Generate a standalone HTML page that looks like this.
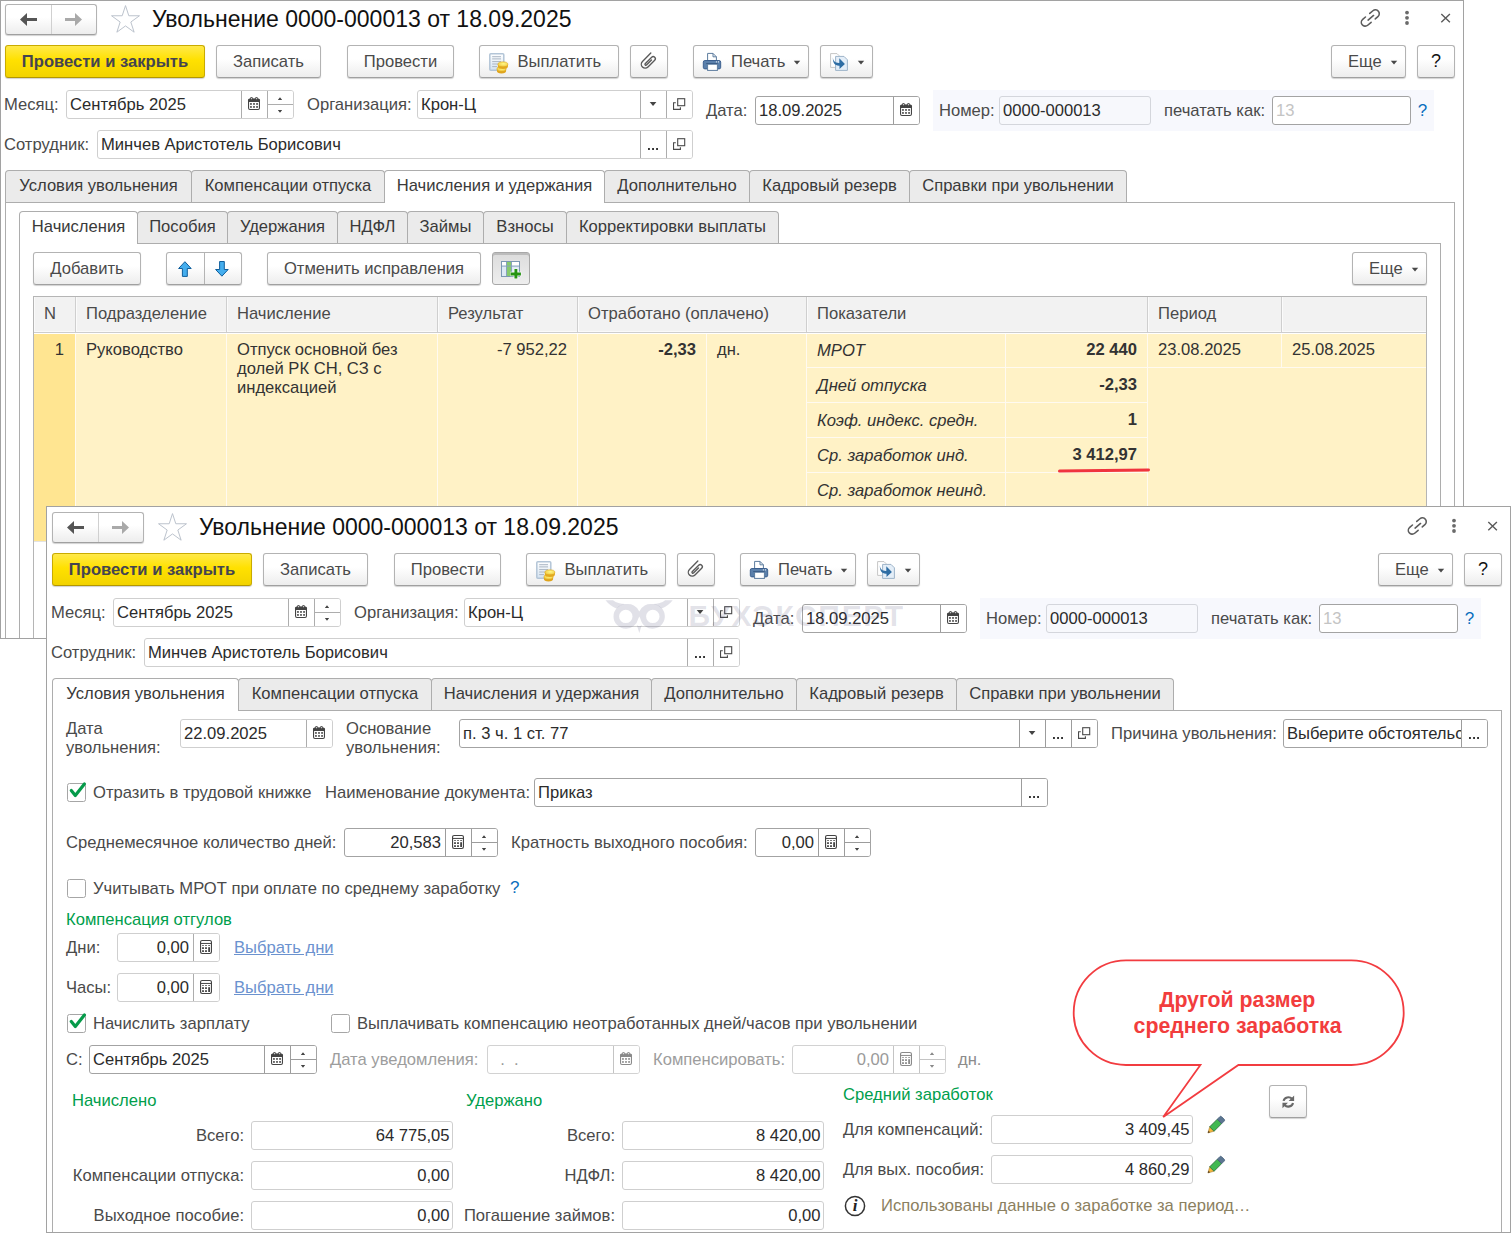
<!DOCTYPE html><html lang="ru"><head><meta charset="utf-8"><title>Увольнение 0000-000013 от 18.09.2025</title><style>
*{box-sizing:border-box;margin:0;padding:0}
html,body{width:1511px;height:1233px;overflow:hidden;background:#fff}
body{font-family:"Liberation Sans",sans-serif;font-size:16.6px;color:#333;position:relative}
.a,.w,.in,.b,.f,.l,.t,.fb,.tab,.cb,.ln{position:absolute}
.w{border:1px solid #a2a2a2;background:#fff;overflow:hidden}
.in{left:0;top:0;width:1470px;height:760px}
.l{white-space:nowrap;color:#4a4a4a;line-height:19px}
.b{border:1px solid #b3b3b3;border-bottom-color:#a0a0a0;border-radius:3px;background:linear-gradient(#ffffff 0%,#ffffff 42%,#ededed 100%);box-shadow:0 1px 1px rgba(0,0,0,.18);text-align:center;color:#4a4a4a;white-space:nowrap;height:33px;line-height:31px}
.b.y{background:linear-gradient(#ffe94a 0%,#ffe100 45%,#f2d300 100%);border-color:#c9ab00;border-bottom-color:#b39700;color:#444450;font-weight:bold}
.b.p{background:linear-gradient(#dcdcdc,#eeeeee);border-color:#a8a8a8;box-shadow:inset 0 2px 0 #bcbcbc}
.f{border:1px solid #cfcfcf;border-radius:3px;background:#fff;height:29px;line-height:27px;color:#2b2b2b;white-space:nowrap;overflow:hidden;padding:0 4px 0 3px}
.f.d{border-color:#a3a3a3}
.f.r{text-align:right}
.f.g{background:#f7f8fc;border-color:#d4d6dc}
.f.dis{color:#9a9a9a;border-color:#d2d2d2}
.fb{top:0;bottom:0;width:26px;border-left:1px solid #adadad;background:#fff}
.f.d .fb{border-left-color:#9c9c9c}
.f.dis .fb{border-left-color:#c4c4c4}
.fb svg{position:absolute;left:0;top:0}
.tab{height:32px;line-height:29px;border:1px solid #adadad;border-bottom:none;background:#ebebeb;border-radius:4px 4px 0 0;text-align:center;color:#3a3a3a;white-space:nowrap}
.tab.on{background:#fff;height:33px;z-index:2}
.pn{position:absolute;border:1px solid #adadad}
.cb{width:19px;height:19px;border:1px solid #a6a6a6;border-radius:2.5px;background:#fff}
.gr{color:#009e4c}
.lk{color:#6b92cf;text-decoration:underline}
.ln{background:#a2a2a2}
.t{white-space:nowrap;line-height:19px;color:#333}
</style></head><body>
<div class="w" style="left:0;top:0;width:1464px;height:639px"><div class="in" style="left:-1px;top:-1px">
<div class="b" style="left:5px;top:4px;width:92px;height:31px"></div>
<div class="a" style="left:51px;top:5px;width:1px;height:29px;background:#d0d0d0"></div>
<svg class="a" style="left:5px;top:4px" width="92" height="30" viewBox="0 0 92 30"><path d="M15 15.5 L22 9 L22 14 L32 14 L32 17 L22 17 L22 22 Z" fill="#555"/><path d="M77 15.5 L70 9 L70 14 L60 14 L60 17 L70 17 L70 22 Z" fill="#a9a9a9"/></svg>
<svg class="a" style="left:108px;top:3px" width="35" height="33" viewBox="0 0 35 33"><path d="M17.50 2.60 L20.80 12.76 L31.48 12.76 L22.84 19.04 L26.14 29.19 L17.50 22.92 L8.86 29.19 L12.16 19.04 L3.52 12.76 L14.20 12.76 Z" fill="#fff" stroke="#bcc3cd" stroke-width="1" stroke-linejoin="miter"/></svg>
<div class="a" style="left:152px;top:4px;font-size:23px;line-height:30px;color:#111;white-space:nowrap">Увольнение 0000-000013 от 18.09.2025</div>
<svg class="a" style="left:1356px;top:4px" width="29" height="28" viewBox="0 0 29 28"><g transform="translate(14.3 14) rotate(-40) scale(0.9)" fill="none" stroke="#5c5c5c" stroke-width="1.75" stroke-linecap="round"><path d="M2.8 -4.3 H7.4 A4.3 4.3 0 0 1 7.4 4.3 H3.6"/><path d="M-3.4 -4.3 H-7.4 A4.3 4.3 0 0 0 -7.4 4.3 H-2.4"/><path d="M-3.4 0.2 H4.6"/></g></svg>
<svg class="a" style="left:1402px;top:9px" width="10" height="18" viewBox="0 0 10 18"><g fill="#6a6a6a"><circle cx="5" cy="3.6" r="1.9"/><circle cx="5" cy="8.8" r="1.9"/><circle cx="5" cy="14" r="1.9"/></g></svg>
<svg class="a" style="left:1439px;top:12px" width="13" height="13" viewBox="0 0 13 13"><path d="M2.3 2 L10.9 10.2 M10.9 2 L2.3 10.2" stroke="#5a5a5a" stroke-width="1.4" fill="none"/></svg>
<div class="b y" style="left:5px;top:45px;width:200px;">Провести и закрыть</div>
<div class="b " style="left:216px;top:45px;width:105px;">Записать</div>
<div class="b " style="left:347px;top:45px;width:107px;">Провести</div>
<div class="b " style="left:479px;top:45px;width:140px;text-align:left;padding-left:37.5px">Выплатить</div>
<svg class="a" style="left:487px;top:51px" width="24" height="24" viewBox="0 0 24 24"><defs><linearGradient id="gdoc" x1="0" y1="0" x2="0" y2="1"><stop offset="0" stop-color="#ffffff"/><stop offset="1" stop-color="#d3e2f0"/></linearGradient><radialGradient id="gcoin" cx=".55" cy=".4" r=".7"><stop offset="0" stop-color="#fff98a"/><stop offset="1" stop-color="#efc030"/></radialGradient></defs><rect x="2.8" y="2.8" width="14" height="16.4" rx="1" fill="url(#gdoc)" stroke="#b3c5d7" stroke-width="1.5"/><path d="M5.2 5.7 H14 M5.2 7.9 H14 M5.2 10.6 H14 M5.2 13 H12 M5.2 15.6 H10" stroke="#aab5c3" stroke-width="1" fill="none"/><path d="M9.9 17.9 V20 A4.6 2.4 0 0 0 19.1 20 V17.9 Z" fill="#dfa41c"/><ellipse cx="14.5" cy="17.9" rx="4.6" ry="2.4" fill="url(#gcoin)" stroke="#dba520" stroke-width=".5"/><path d="M10.9 13.3 V15.4 A5 2.5 0 0 0 20.9 15.4 V13.3 Z" fill="#e3a91e"/><ellipse cx="15.9" cy="13.3" rx="5" ry="2.5" fill="url(#gcoin)" stroke="#dba520" stroke-width=".5"/></svg>
<div class="b " style="left:630px;top:45px;width:38px;"></div>
<svg class="a" style="left:638px;top:50px" width="22" height="22" viewBox="0 0 22 22"><g transform="translate(10.4 11) rotate(-45)" fill="none" stroke="#5a5a5a" stroke-width="1.35" stroke-linecap="round"><path d="M7.3 -3.9 L-4.5 -3.9 A3.9 3.9 0 0 0 -4.5 3.9 L5 3.9 A2.12 2.12 0 0 0 5 -0.35 L-4.2 -0.35 A0.93 0.93 0 0 0 -4.2 1.5 L2.9 1.5"/></g></svg>
<div class="b " style="left:693px;top:45px;width:116px;text-align:left;padding-left:37px">Печать</div>
<svg class="a" style="left:701px;top:51px" width="22" height="21" viewBox="0 0 22 21"><path d="M6.6 9.6 V2.4 H12 L15.4 5.8 V9.6 Z" fill="#fff" stroke="#5c7c9e" stroke-width="1"/><path d="M12 2.4 V5.8 H15.4" fill="none" stroke="#5c7c9e" stroke-width="1"/><rect x="2.3" y="9.5" width="17.4" height="8.4" rx="1.6" fill="#5b80ab" stroke="#34598a" stroke-width=".9"/><rect x="5.4" y="12" width="11.2" height="1.1" fill="#2f527e"/><rect x="6.6" y="13.2" width="9.8" height="6.2" fill="#fff" stroke="#5c7c9e" stroke-width="1"/><rect x="14.9" y="10.4" width="1" height="1" fill="#fff"/><rect x="17" y="10.4" width="1" height="1" fill="#fff"/></svg>
<svg class="a" style="left:793px;top:60px" width="8" height="5" viewBox="0 0 8 5"><path d="M0.8 0.8 H7.2 L4 4.4 Z" fill="#484848"/></svg>
<div class="b " style="left:820px;top:45px;width:53px;"></div>
<svg class="a" style="left:829px;top:52px" width="20" height="20" viewBox="0 0 20 20"><path d="M1.6 1.6 H8 L10 3.6 V15.4 H1.6 Z" fill="#fff" stroke="#c6c6c6" stroke-width="1"/><path d="M6.6 4.4 H15 L18.4 7.8 V18.4 H6.6 Z" fill="#e4eef8" stroke="#9db3c9" stroke-width="1"/><path d="M3.9 5.3 C4.2 9.6 6.2 11 10.3 10.9 V6.2 L15.9 11.9 L10.5 16.9 V13.7 C6 14 3.5 11 3.9 5.3 Z" fill="#2e6da4"/></svg>
<svg class="a" style="left:857px;top:60px" width="8" height="5" viewBox="0 0 8 5"><path d="M0.8 0.8 H7.2 L4 4.4 Z" fill="#484848"/></svg>
<div class="b " style="left:1331px;top:45px;width:75px;text-align:left;padding-left:16px">Еще</div>
<svg class="a" style="left:1390px;top:60px" width="8" height="5" viewBox="0 0 8 5"><path d="M0.8 0.8 H7.2 L4 4.4 Z" fill="#484848"/></svg>
<div class="b " style="left:1417px;top:45px;width:38px;color:#111;font-size:18px">?</div>
<div class="l " style="left:4px;top:95px;">Месяц:</div>
<div class="f " style="left:66px;top:90px;width:228px;height:29px;line-height:27px;padding-right:56px;">Сентябрь 2025<div class="fb" style="right:26px"><svg width="26" height="27" viewBox="0 0 26 27"><path d="M6 9.4 Q6 7.6 7.8 7.6 H16.2 Q18 7.6 18 9.4 V11 H6 Z" fill="#444"/><rect x="8.2" y="6" width="2.6" height="3.6" rx="1.3" fill="#444"/><rect x="13.2" y="6" width="2.6" height="3.6" rx="1.3" fill="#444"/><rect x="9" y="6.7" width="1" height="2.1" rx=".5" fill="#fff"/><rect x="14" y="6.7" width="1" height="2.1" rx=".5" fill="#fff"/><rect x="6.55" y="8.2" width="10.9" height="10.3" rx="1.4" fill="none" stroke="#444" stroke-width="1.1"/><g fill="#444"><rect x="8.1" y="12.1" width="1.7" height="1.7"/><rect x="11.15" y="12.1" width="1.7" height="1.7"/><rect x="14.2" y="12.1" width="1.7" height="1.7"/><rect x="8.1" y="15.1" width="1.7" height="1.7"/><rect x="11.15" y="15.1" width="1.7" height="1.7"/><rect x="14.2" y="15.1" width="1.7" height="1.7"/></g></svg></div><div class="fb" style="right:0px"><svg width="26" height="27" viewBox="0 0 26 27"><rect x="0" y="13" width="26" height="1" fill="#adadad"/><path d="M9.8 9.1 L12 6.3 L14.2 9.1 Z M9.8 19 L12 21.7 L14.2 19 Z" fill="#444"/></svg></div></div>
<div class="l " style="left:307px;top:95px;">Организация:</div>
<div class="f " style="left:417px;top:90px;width:276px;height:29px;line-height:27px;padding-right:56px;">Крон-Ц<div class="fb" style="right:26px"><svg width="26" height="27" viewBox="0 0 26 27"><path d="M8.7 11 L15.4 11 L12.05 15.1 Z" fill="#444"/></svg></div><div class="fb" style="right:0px"><svg width="26" height="27" viewBox="0 0 26 27"><g fill="none" stroke="#4a4a4a" stroke-width="1.1"><path d="M8.8 11.75 H6.55 V18.4 H13.4 V16.3"/><rect x="10.7" y="7.7" width="7" height="7"/></g></svg></div></div>
<div class="l " style="left:706px;top:101px;">Дата:</div>
<div class="f d" style="left:755px;top:96px;width:165px;height:29px;line-height:27px;padding-right:30px;">18.09.2025<div class="fb" style="right:0px"><svg width="26" height="27" viewBox="0 0 26 27"><path d="M6 9.4 Q6 7.6 7.8 7.6 H16.2 Q18 7.6 18 9.4 V11 H6 Z" fill="#444"/><rect x="8.2" y="6" width="2.6" height="3.6" rx="1.3" fill="#444"/><rect x="13.2" y="6" width="2.6" height="3.6" rx="1.3" fill="#444"/><rect x="9" y="6.7" width="1" height="2.1" rx=".5" fill="#fff"/><rect x="14" y="6.7" width="1" height="2.1" rx=".5" fill="#fff"/><rect x="6.55" y="8.2" width="10.9" height="10.3" rx="1.4" fill="none" stroke="#444" stroke-width="1.1"/><g fill="#444"><rect x="8.1" y="12.1" width="1.7" height="1.7"/><rect x="11.15" y="12.1" width="1.7" height="1.7"/><rect x="14.2" y="12.1" width="1.7" height="1.7"/><rect x="8.1" y="15.1" width="1.7" height="1.7"/><rect x="11.15" y="15.1" width="1.7" height="1.7"/><rect x="14.2" y="15.1" width="1.7" height="1.7"/></g></svg></div></div>
<div class="a" style="left:933px;top:90px;width:501px;height:41px;background:#f7f8fd"></div>
<div class="l " style="left:939px;top:101px;">Номер:</div>
<div class="f g" style="left:999px;top:96px;width:152px;height:29px;line-height:27px;padding-right:4px;">0000-000013</div>
<div class="l " style="left:1164px;top:101px;">печатать как:</div>
<div class="f d" style="left:1272px;top:96px;width:139px;height:29px;line-height:27px;padding-right:4px;"><span style="color:#c4c4c4">13</span></div>
<div class="l " style="left:1417.8px;top:101px;color:#0a6ebd;font-size:17px">?</div>
<div class="l " style="left:4px;top:135px;">Сотрудник:</div>
<div class="f " style="left:97px;top:130px;width:596px;height:29px;line-height:27px;padding-right:56px;">Минчев Аристотель Борисович<div class="fb" style="right:26px"><svg width="26" height="27" viewBox="0 0 26 27"><g fill="#333"><rect x="7" y="17" width="1.9" height="2"/><rect x="11.1" y="17" width="1.9" height="2"/><rect x="15.1" y="17" width="1.9" height="2"/></g></svg></div><div class="fb" style="right:0px"><svg width="26" height="27" viewBox="0 0 26 27"><g fill="none" stroke="#4a4a4a" stroke-width="1.1"><path d="M8.8 11.75 H6.55 V18.4 H13.4 V16.3"/><rect x="10.7" y="7.7" width="7" height="7"/></g></svg></div></div>
<div class="pn" style="left:5px;top:202px;width:1450px;height:450px"></div>
<div class="tab" style="left:5px;top:170px;width:187px">Условия увольнения</div>
<div class="tab" style="left:191px;top:170px;width:194px">Компенсации отпуска</div>
<div class="tab on" style="left:384px;top:170px;width:221px">Начисления и удержания</div>
<div class="tab" style="left:604px;top:170px;width:146px">Дополнительно</div>
<div class="tab" style="left:749px;top:170px;width:161px">Кадровый резерв</div>
<div class="tab" style="left:909px;top:170px;width:218px">Справки при увольнении</div>
<div class="pn" style="left:19px;top:243px;width:1422px;height:420px"></div>
<div class="tab on" style="left:19px;top:211px;width:119px">Начисления</div>
<div class="tab" style="left:137px;top:211px;width:91px">Пособия</div>
<div class="tab" style="left:227px;top:211px;width:111px">Удержания</div>
<div class="tab" style="left:337px;top:211px;width:71px">НДФЛ</div>
<div class="tab" style="left:407px;top:211px;width:77px">Займы</div>
<div class="tab" style="left:483px;top:211px;width:84px">Взносы</div>
<div class="tab" style="left:566px;top:211px;width:213px">Корректировки выплаты</div>
<div class="b " style="left:33px;top:252px;width:108px;">Добавить</div>
<div class="b " style="left:166px;top:252px;width:76px;"></div>
<div class="a" style="left:204px;top:253px;width:1px;height:31px;background:#b4b4b4"></div>
<svg class="a" style="left:166px;top:252px" width="76" height="33" viewBox="0 0 76 33"><path d="M18.9 9.7 L25.2 16.5 H21.3 V24.4 H16.4 V16.5 H12.6 Z" fill="#45aeee" stroke="#0f5e9c" stroke-width="1" stroke-linejoin="round"/><path d="M55.9 24.2 L62.2 17.5 H58.3 V9.5 H53.6 V17.5 H49.6 Z" fill="#45aeee" stroke="#0f5e9c" stroke-width="1" stroke-linejoin="round"/></svg>
<div class="b " style="left:267px;top:252px;width:214px;">Отменить исправления</div>
<div class="b p" style="left:492px;top:252px;width:38px;"></div>
<svg class="a" style="left:500px;top:260px" width="23" height="20" viewBox="0 0 23 20"><rect x="1.5" y="1.5" width="18" height="15" fill="#dde9f5" stroke="#7b98b3" stroke-width="1"/><rect x="2" y="2" width="17" height="3.6" fill="#fff"/><rect x="7" y="2" width="4.4" height="14" fill="#86ca6c"/><path d="M2 6.1 H19 M6.5 2 V16 M11.5 2 V16" stroke="#88a3bc" stroke-width="1" fill="none"/><path d="M15.9 8.6 V19 M10.4 14 H21.4" stroke="#fff" stroke-width="4.6" opacity=".85" fill="none"/><path d="M15.9 9.1 V18.6 M10.7 14 H20.9" stroke="#259312" stroke-width="2.9" fill="none"/></svg>
<div class="b " style="left:1352px;top:252px;width:75px;text-align:left;padding-left:16px">Еще</div>
<svg class="a" style="left:1411px;top:267px" width="8" height="5" viewBox="0 0 8 5"><path d="M0.8 0.8 H7.2 L4 4.4 Z" fill="#484848"/></svg>
<div class="a" style="left:33px;top:296px;width:1394px;height:350px;border:1px solid #b5b5b5;border-bottom:none;background:#fff"></div>
<div class="a" style="left:34px;top:297px;width:1392px;height:35px;background:#f2f2f2"></div>
<div class="a" style="left:34px;top:331px;width:1392px;height:1px;background:#fafafa"></div>
<div class="a" style="left:34px;top:297px;width:1px;height:35px;background:#fafafa"></div>
<div class="a" style="left:34px;top:332px;width:1392px;height:1px;background:#cdcdcd"></div>
<div class="a" style="left:34px;top:334px;width:1392px;height:207px;background:#fff2c6"></div>
<div class="a" style="left:34px;top:334px;width:41px;height:207px;background:#ffe591"></div>
<div class="a" style="left:34px;top:541px;width:1392px;height:1px;background:#e3e3e3"></div>
<div class="a" style="left:75px;top:297px;width:1px;height:35px;background:#cfcfcf"></div>
<div class="a" style="left:76px;top:297px;width:1px;height:35px;background:#fbfbfb"></div>
<div class="a" style="left:226px;top:297px;width:1px;height:35px;background:#cfcfcf"></div>
<div class="a" style="left:227px;top:297px;width:1px;height:35px;background:#fbfbfb"></div>
<div class="a" style="left:437px;top:297px;width:1px;height:35px;background:#cfcfcf"></div>
<div class="a" style="left:438px;top:297px;width:1px;height:35px;background:#fbfbfb"></div>
<div class="a" style="left:577px;top:297px;width:1px;height:35px;background:#cfcfcf"></div>
<div class="a" style="left:578px;top:297px;width:1px;height:35px;background:#fbfbfb"></div>
<div class="a" style="left:806px;top:297px;width:1px;height:35px;background:#cfcfcf"></div>
<div class="a" style="left:807px;top:297px;width:1px;height:35px;background:#fbfbfb"></div>
<div class="a" style="left:1147px;top:297px;width:1px;height:35px;background:#cfcfcf"></div>
<div class="a" style="left:1148px;top:297px;width:1px;height:35px;background:#fbfbfb"></div>
<div class="a" style="left:1281px;top:297px;width:1px;height:35px;background:#cfcfcf"></div>
<div class="a" style="left:1282px;top:297px;width:1px;height:35px;background:#fbfbfb"></div>
<div class="a" style="left:75px;top:334px;width:1px;height:207px;background:#fffaf0"></div>
<div class="a" style="left:226px;top:334px;width:1px;height:207px;background:#fffaf0"></div>
<div class="a" style="left:437px;top:334px;width:1px;height:207px;background:#fffaf0"></div>
<div class="a" style="left:577px;top:334px;width:1px;height:207px;background:#fffaf0"></div>
<div class="a" style="left:706px;top:334px;width:1px;height:207px;background:#fffaf0"></div>
<div class="a" style="left:806px;top:334px;width:1px;height:207px;background:#fffaf0"></div>
<div class="a" style="left:1005px;top:334px;width:1px;height:207px;background:#fffaf0"></div>
<div class="a" style="left:1147px;top:334px;width:1px;height:207px;background:#fffaf0"></div>
<div class="a" style="left:1281px;top:334px;width:1px;height:33px;background:#fffaf0"></div>
<div class="a" style="left:807px;top:367px;width:340px;height:1px;background:#fffaf0"></div>
<div class="a" style="left:807px;top:402px;width:340px;height:1px;background:#fffaf0"></div>
<div class="a" style="left:807px;top:437px;width:340px;height:1px;background:#fffaf0"></div>
<div class="a" style="left:807px;top:472px;width:340px;height:1px;background:#fffaf0"></div>
<div class="a" style="left:807px;top:507px;width:340px;height:1px;background:#fffaf0"></div>
<div class="a" style="left:1148px;top:367px;width:278px;height:1px;background:#fffaf0"></div>
<div class="t" style="left:44px;top:304px;color:#4a4a4a">N</div>
<div class="t" style="left:86px;top:304px;color:#4a4a4a">Подразделение</div>
<div class="t" style="left:237px;top:304px;color:#4a4a4a">Начисление</div>
<div class="t" style="left:448px;top:304px;color:#4a4a4a">Результат</div>
<div class="t" style="left:588px;top:304px;color:#4a4a4a">Отработано (оплачено)</div>
<div class="t" style="left:817px;top:304px;color:#4a4a4a">Показатели</div>
<div class="t" style="left:1158px;top:304px;color:#4a4a4a">Период</div>
<div class="t" style="left:-236px;width:300px;text-align:right;top:340px;">1</div>
<div class="t" style="left:86px;top:340px;">Руководство</div>
<div class="t" style="left:237px;top:340px;">Отпуск основной без<br>долей РК СН, СЗ с<br>индексацией</div>
<div class="t" style="left:267px;width:300px;text-align:right;top:340px;">-7 952,22</div>
<div class="t" style="left:396px;width:300px;text-align:right;top:340px;font-weight:bold">-2,33</div>
<div class="t" style="left:717px;top:340px;">дн.</div>
<div class="t" style="left:817px;top:341px;font-style:italic">МРОТ</div>
<div class="t" style="left:837px;width:300px;text-align:right;top:340px;font-weight:bold">22 440</div>
<div class="t" style="left:817px;top:376px;font-style:italic">Дней отпуска</div>
<div class="t" style="left:837px;width:300px;text-align:right;top:375px;font-weight:bold">-2,33</div>
<div class="t" style="left:817px;top:411px;font-style:italic">Коэф. индекс. средн.</div>
<div class="t" style="left:837px;width:300px;text-align:right;top:410px;font-weight:bold">1</div>
<div class="t" style="left:817px;top:446px;font-style:italic">Ср. заработок инд.</div>
<div class="t" style="left:837px;width:300px;text-align:right;top:445px;font-weight:bold">3 412,97</div>
<div class="t" style="left:817px;top:481px;font-style:italic">Ср. заработок неинд.</div>
<div class="t" style="left:1158px;top:340px;">23.08.2025</div>
<div class="t" style="left:1292px;top:340px;">25.08.2025</div>
<div class="a" style="left:1058px;top:469px;width:91.5px;height:3.2px;border-radius:2px;background:#f0343e;transform:rotate(-0.8deg)"></div>
</div></div>
<div class="w" style="left:46px;top:506px;width:1465px;height:727px"><div class="in" style="left:0;top:1px">
<div class="b" style="left:5px;top:4px;width:92px;height:31px"></div>
<div class="a" style="left:51px;top:5px;width:1px;height:29px;background:#d0d0d0"></div>
<svg class="a" style="left:5px;top:4px" width="92" height="30" viewBox="0 0 92 30"><path d="M15 15.5 L22 9 L22 14 L32 14 L32 17 L22 17 L22 22 Z" fill="#555"/><path d="M77 15.5 L70 9 L70 14 L60 14 L60 17 L70 17 L70 22 Z" fill="#a9a9a9"/></svg>
<svg class="a" style="left:108px;top:3px" width="35" height="33" viewBox="0 0 35 33"><path d="M17.50 2.60 L20.80 12.76 L31.48 12.76 L22.84 19.04 L26.14 29.19 L17.50 22.92 L8.86 29.19 L12.16 19.04 L3.52 12.76 L14.20 12.76 Z" fill="#fff" stroke="#bcc3cd" stroke-width="1" stroke-linejoin="miter"/></svg>
<div class="a" style="left:152px;top:4px;font-size:23px;line-height:30px;color:#111;white-space:nowrap">Увольнение 0000-000013 от 18.09.2025</div>
<svg class="a" style="left:1356px;top:4px" width="29" height="28" viewBox="0 0 29 28"><g transform="translate(14.3 14) rotate(-40) scale(0.9)" fill="none" stroke="#5c5c5c" stroke-width="1.75" stroke-linecap="round"><path d="M2.8 -4.3 H7.4 A4.3 4.3 0 0 1 7.4 4.3 H3.6"/><path d="M-3.4 -4.3 H-7.4 A4.3 4.3 0 0 0 -7.4 4.3 H-2.4"/><path d="M-3.4 0.2 H4.6"/></g></svg>
<svg class="a" style="left:1402px;top:9px" width="10" height="18" viewBox="0 0 10 18"><g fill="#6a6a6a"><circle cx="5" cy="3.6" r="1.9"/><circle cx="5" cy="8.8" r="1.9"/><circle cx="5" cy="14" r="1.9"/></g></svg>
<svg class="a" style="left:1439px;top:12px" width="13" height="13" viewBox="0 0 13 13"><path d="M2.3 2 L10.9 10.2 M10.9 2 L2.3 10.2" stroke="#5a5a5a" stroke-width="1.4" fill="none"/></svg>
<div class="b y" style="left:5px;top:45px;width:200px;">Провести и закрыть</div>
<div class="b " style="left:216px;top:45px;width:105px;">Записать</div>
<div class="b " style="left:347px;top:45px;width:107px;">Провести</div>
<div class="b " style="left:479px;top:45px;width:140px;text-align:left;padding-left:37.5px">Выплатить</div>
<svg class="a" style="left:487px;top:51px" width="24" height="24" viewBox="0 0 24 24"><defs><linearGradient id="gdoc" x1="0" y1="0" x2="0" y2="1"><stop offset="0" stop-color="#ffffff"/><stop offset="1" stop-color="#d3e2f0"/></linearGradient><radialGradient id="gcoin" cx=".55" cy=".4" r=".7"><stop offset="0" stop-color="#fff98a"/><stop offset="1" stop-color="#efc030"/></radialGradient></defs><rect x="2.8" y="2.8" width="14" height="16.4" rx="1" fill="url(#gdoc)" stroke="#b3c5d7" stroke-width="1.5"/><path d="M5.2 5.7 H14 M5.2 7.9 H14 M5.2 10.6 H14 M5.2 13 H12 M5.2 15.6 H10" stroke="#aab5c3" stroke-width="1" fill="none"/><path d="M9.9 17.9 V20 A4.6 2.4 0 0 0 19.1 20 V17.9 Z" fill="#dfa41c"/><ellipse cx="14.5" cy="17.9" rx="4.6" ry="2.4" fill="url(#gcoin)" stroke="#dba520" stroke-width=".5"/><path d="M10.9 13.3 V15.4 A5 2.5 0 0 0 20.9 15.4 V13.3 Z" fill="#e3a91e"/><ellipse cx="15.9" cy="13.3" rx="5" ry="2.5" fill="url(#gcoin)" stroke="#dba520" stroke-width=".5"/></svg>
<div class="b " style="left:630px;top:45px;width:38px;"></div>
<svg class="a" style="left:638px;top:50px" width="22" height="22" viewBox="0 0 22 22"><g transform="translate(10.4 11) rotate(-45)" fill="none" stroke="#5a5a5a" stroke-width="1.35" stroke-linecap="round"><path d="M7.3 -3.9 L-4.5 -3.9 A3.9 3.9 0 0 0 -4.5 3.9 L5 3.9 A2.12 2.12 0 0 0 5 -0.35 L-4.2 -0.35 A0.93 0.93 0 0 0 -4.2 1.5 L2.9 1.5"/></g></svg>
<div class="b " style="left:693px;top:45px;width:116px;text-align:left;padding-left:37px">Печать</div>
<svg class="a" style="left:701px;top:51px" width="22" height="21" viewBox="0 0 22 21"><path d="M6.6 9.6 V2.4 H12 L15.4 5.8 V9.6 Z" fill="#fff" stroke="#5c7c9e" stroke-width="1"/><path d="M12 2.4 V5.8 H15.4" fill="none" stroke="#5c7c9e" stroke-width="1"/><rect x="2.3" y="9.5" width="17.4" height="8.4" rx="1.6" fill="#5b80ab" stroke="#34598a" stroke-width=".9"/><rect x="5.4" y="12" width="11.2" height="1.1" fill="#2f527e"/><rect x="6.6" y="13.2" width="9.8" height="6.2" fill="#fff" stroke="#5c7c9e" stroke-width="1"/><rect x="14.9" y="10.4" width="1" height="1" fill="#fff"/><rect x="17" y="10.4" width="1" height="1" fill="#fff"/></svg>
<svg class="a" style="left:793px;top:60px" width="8" height="5" viewBox="0 0 8 5"><path d="M0.8 0.8 H7.2 L4 4.4 Z" fill="#484848"/></svg>
<div class="b " style="left:820px;top:45px;width:53px;"></div>
<svg class="a" style="left:829px;top:52px" width="20" height="20" viewBox="0 0 20 20"><path d="M1.6 1.6 H8 L10 3.6 V15.4 H1.6 Z" fill="#fff" stroke="#c6c6c6" stroke-width="1"/><path d="M6.6 4.4 H15 L18.4 7.8 V18.4 H6.6 Z" fill="#e4eef8" stroke="#9db3c9" stroke-width="1"/><path d="M3.9 5.3 C4.2 9.6 6.2 11 10.3 10.9 V6.2 L15.9 11.9 L10.5 16.9 V13.7 C6 14 3.5 11 3.9 5.3 Z" fill="#2e6da4"/></svg>
<svg class="a" style="left:857px;top:60px" width="8" height="5" viewBox="0 0 8 5"><path d="M0.8 0.8 H7.2 L4 4.4 Z" fill="#484848"/></svg>
<div class="b " style="left:1331px;top:45px;width:75px;text-align:left;padding-left:16px">Еще</div>
<svg class="a" style="left:1390px;top:60px" width="8" height="5" viewBox="0 0 8 5"><path d="M0.8 0.8 H7.2 L4 4.4 Z" fill="#484848"/></svg>
<div class="b " style="left:1417px;top:45px;width:38px;color:#111;font-size:18px">?</div>
<div class="l " style="left:4px;top:95px;">Месяц:</div>
<div class="f " style="left:66px;top:90px;width:228px;height:29px;line-height:27px;padding-right:56px;">Сентябрь 2025<div class="fb" style="right:26px"><svg width="26" height="27" viewBox="0 0 26 27"><path d="M6 9.4 Q6 7.6 7.8 7.6 H16.2 Q18 7.6 18 9.4 V11 H6 Z" fill="#444"/><rect x="8.2" y="6" width="2.6" height="3.6" rx="1.3" fill="#444"/><rect x="13.2" y="6" width="2.6" height="3.6" rx="1.3" fill="#444"/><rect x="9" y="6.7" width="1" height="2.1" rx=".5" fill="#fff"/><rect x="14" y="6.7" width="1" height="2.1" rx=".5" fill="#fff"/><rect x="6.55" y="8.2" width="10.9" height="10.3" rx="1.4" fill="none" stroke="#444" stroke-width="1.1"/><g fill="#444"><rect x="8.1" y="12.1" width="1.7" height="1.7"/><rect x="11.15" y="12.1" width="1.7" height="1.7"/><rect x="14.2" y="12.1" width="1.7" height="1.7"/><rect x="8.1" y="15.1" width="1.7" height="1.7"/><rect x="11.15" y="15.1" width="1.7" height="1.7"/><rect x="14.2" y="15.1" width="1.7" height="1.7"/></g></svg></div><div class="fb" style="right:0px"><svg width="26" height="27" viewBox="0 0 26 27"><rect x="0" y="13" width="26" height="1" fill="#adadad"/><path d="M9.8 9.1 L12 6.3 L14.2 9.1 Z M9.8 19 L12 21.7 L14.2 19 Z" fill="#444"/></svg></div></div>
<div class="l " style="left:307px;top:95px;">Организация:</div>
<div class="f " style="left:417px;top:90px;width:276px;height:29px;line-height:27px;padding-right:56px;">Крон-Ц<div class="fb" style="right:26px"><svg width="26" height="27" viewBox="0 0 26 27"><path d="M8.7 11 L15.4 11 L12.05 15.1 Z" fill="#444"/></svg></div><div class="fb" style="right:0px"><svg width="26" height="27" viewBox="0 0 26 27"><g fill="none" stroke="#4a4a4a" stroke-width="1.1"><path d="M8.8 11.75 H6.55 V18.4 H13.4 V16.3"/><rect x="10.7" y="7.7" width="7" height="7"/></g></svg></div></div>
<div class="l " style="left:706px;top:101px;">Дата:</div>
<div class="f d" style="left:755px;top:96px;width:165px;height:29px;line-height:27px;padding-right:30px;">18.09.2025<div class="fb" style="right:0px"><svg width="26" height="27" viewBox="0 0 26 27"><path d="M6 9.4 Q6 7.6 7.8 7.6 H16.2 Q18 7.6 18 9.4 V11 H6 Z" fill="#444"/><rect x="8.2" y="6" width="2.6" height="3.6" rx="1.3" fill="#444"/><rect x="13.2" y="6" width="2.6" height="3.6" rx="1.3" fill="#444"/><rect x="9" y="6.7" width="1" height="2.1" rx=".5" fill="#fff"/><rect x="14" y="6.7" width="1" height="2.1" rx=".5" fill="#fff"/><rect x="6.55" y="8.2" width="10.9" height="10.3" rx="1.4" fill="none" stroke="#444" stroke-width="1.1"/><g fill="#444"><rect x="8.1" y="12.1" width="1.7" height="1.7"/><rect x="11.15" y="12.1" width="1.7" height="1.7"/><rect x="14.2" y="12.1" width="1.7" height="1.7"/><rect x="8.1" y="15.1" width="1.7" height="1.7"/><rect x="11.15" y="15.1" width="1.7" height="1.7"/><rect x="14.2" y="15.1" width="1.7" height="1.7"/></g></svg></div></div>
<div class="a" style="left:933px;top:90px;width:501px;height:41px;background:#f7f8fd"></div>
<div class="l " style="left:939px;top:101px;">Номер:</div>
<div class="f g" style="left:999px;top:96px;width:152px;height:29px;line-height:27px;padding-right:4px;">0000-000013</div>
<div class="l " style="left:1164px;top:101px;">печатать как:</div>
<div class="f d" style="left:1272px;top:96px;width:139px;height:29px;line-height:27px;padding-right:4px;"><span style="color:#c4c4c4">13</span></div>
<div class="l " style="left:1417.8px;top:101px;color:#0a6ebd;font-size:17px">?</div>
<div class="l " style="left:4px;top:135px;">Сотрудник:</div>
<div class="f " style="left:97px;top:130px;width:596px;height:29px;line-height:27px;padding-right:56px;">Минчев Аристотель Борисович<div class="fb" style="right:26px"><svg width="26" height="27" viewBox="0 0 26 27"><g fill="#333"><rect x="7" y="17" width="1.9" height="2"/><rect x="11.1" y="17" width="1.9" height="2"/><rect x="15.1" y="17" width="1.9" height="2"/></g></svg></div><div class="fb" style="right:0px"><svg width="26" height="27" viewBox="0 0 26 27"><g fill="none" stroke="#4a4a4a" stroke-width="1.1"><path d="M8.8 11.75 H6.55 V18.4 H13.4 V16.3"/><rect x="10.7" y="7.7" width="7" height="7"/></g></svg></div></div>
<div class="pn" style="left:5px;top:202px;width:1450px;height:540px"></div>
<div class="tab on" style="left:5px;top:170px;width:187px">Условия увольнения</div>
<div class="tab" style="left:191px;top:170px;width:194px">Компенсации отпуска</div>
<div class="tab" style="left:384px;top:170px;width:221px">Начисления и удержания</div>
<div class="tab" style="left:604px;top:170px;width:146px">Дополнительно</div>
<div class="tab" style="left:749px;top:170px;width:161px">Кадровый резерв</div>
<div class="tab" style="left:909px;top:170px;width:218px">Справки при увольнении</div>
<div class="l " style="left:19px;top:211px;">Дата<br>увольнения:</div>
<div class="f " style="left:133px;top:211px;width:153px;height:29px;line-height:27px;padding-right:30px;">22.09.2025<div class="fb" style="right:0px"><svg width="26" height="27" viewBox="0 0 26 27"><path d="M6 9.4 Q6 7.6 7.8 7.6 H16.2 Q18 7.6 18 9.4 V11 H6 Z" fill="#444"/><rect x="8.2" y="6" width="2.6" height="3.6" rx="1.3" fill="#444"/><rect x="13.2" y="6" width="2.6" height="3.6" rx="1.3" fill="#444"/><rect x="9" y="6.7" width="1" height="2.1" rx=".5" fill="#fff"/><rect x="14" y="6.7" width="1" height="2.1" rx=".5" fill="#fff"/><rect x="6.55" y="8.2" width="10.9" height="10.3" rx="1.4" fill="none" stroke="#444" stroke-width="1.1"/><g fill="#444"><rect x="8.1" y="12.1" width="1.7" height="1.7"/><rect x="11.15" y="12.1" width="1.7" height="1.7"/><rect x="14.2" y="12.1" width="1.7" height="1.7"/><rect x="8.1" y="15.1" width="1.7" height="1.7"/><rect x="11.15" y="15.1" width="1.7" height="1.7"/><rect x="14.2" y="15.1" width="1.7" height="1.7"/></g></svg></div></div>
<div class="l " style="left:299px;top:211px;">Основание<br>увольнения:</div>
<div class="f d" style="left:412px;top:211px;width:639px;height:29px;line-height:27px;padding-right:82px;">п. 3 ч. 1 ст. 77<div class="fb" style="right:52px"><svg width="26" height="27" viewBox="0 0 26 27"><path d="M8.7 11 L15.4 11 L12.05 15.1 Z" fill="#444"/></svg></div><div class="fb" style="right:26px"><svg width="26" height="27" viewBox="0 0 26 27"><g fill="#333"><rect x="7" y="17" width="1.9" height="2"/><rect x="11.1" y="17" width="1.9" height="2"/><rect x="15.1" y="17" width="1.9" height="2"/></g></svg></div><div class="fb" style="right:0px"><svg width="26" height="27" viewBox="0 0 26 27"><g fill="none" stroke="#4a4a4a" stroke-width="1.1"><path d="M8.8 11.75 H6.55 V18.4 H13.4 V16.3"/><rect x="10.7" y="7.7" width="7" height="7"/></g></svg></div></div>
<div class="l " style="left:1064px;top:216px;">Причина увольнения:</div>
<div class="f d" style="left:1236px;top:211px;width:205px;height:29px;line-height:27px;padding-right:30px;">Выберите обстоятельства<div class="fb" style="right:0px"><svg width="26" height="27" viewBox="0 0 26 27"><g fill="#333"><rect x="7" y="17" width="1.9" height="2"/><rect x="11.1" y="17" width="1.9" height="2"/><rect x="15.1" y="17" width="1.9" height="2"/></g></svg></div></div>
<div class="cb" style="left:20px;top:275px"><svg width="23" height="23" viewBox="0 0 23 23" style="position:absolute;left:-1px;top:-5px;overflow:visible"><path d="M4.3 11.5 L8.3 16.5 L17.4 5" fill="none" stroke="#059b4a" stroke-width="3.2" stroke-linecap="round" stroke-linejoin="round"/></svg></div>
<div class="l " style="left:46px;top:275px;">Отразить в трудовой книжке</div>
<div class="l " style="left:278px;top:275px;">Наименование документа:</div>
<div class="f d" style="left:487px;top:270px;width:514px;height:29px;line-height:27px;padding-right:30px;">Приказ<div class="fb" style="right:0px"><svg width="26" height="27" viewBox="0 0 26 27"><g fill="#333"><rect x="7" y="17" width="1.9" height="2"/><rect x="11.1" y="17" width="1.9" height="2"/><rect x="15.1" y="17" width="1.9" height="2"/></g></svg></div></div>
<div class="l " style="left:19px;top:325px;">Среднемесячное количество дней:</div>
<div class="f d r" style="left:297px;top:320px;width:154px;height:29px;line-height:27px;padding-right:56px;">20,583<div class="fb" style="right:26px"><svg width="26" height="27" viewBox="0 0 26 27"><rect x="6.55" y="6.45" width="10.9" height="13" rx="1.6" fill="none" stroke="#444" stroke-width="1.15"/><path d="M6.6 9.45 H17.4" stroke="#444" stroke-width="1" fill="none"/><g fill="#444"><rect x="8.1" y="11.1" width="1.8" height=".8"/><rect x="11.1" y="11.1" width="1.8" height=".8"/><rect x="14.2" y="11.1" width="1.8" height=".8"/><rect x="8.1" y="13.2" width="1.8" height="1.8"/><rect x="11.1" y="13.2" width="1.8" height="1.8"/><rect x="8.1" y="16.2" width="1.8" height="1.8"/><rect x="11.1" y="16.2" width="1.8" height="1.8"/><rect x="14.2" y="13.2" width="1.8" height="4.8"/></g></svg></div><div class="fb" style="right:0px"><svg width="26" height="27" viewBox="0 0 26 27"><rect x="0" y="13" width="26" height="1" fill="#9c9c9c"/><path d="M9.8 9.1 L12 6.3 L14.2 9.1 Z M9.8 19 L12 21.7 L14.2 19 Z" fill="#444"/></svg></div></div>
<div class="l " style="left:464px;top:325px;">Кратность выходного пособия:</div>
<div class="f d r" style="left:708px;top:320px;width:116px;height:29px;line-height:27px;padding-right:56px;">0,00<div class="fb" style="right:26px"><svg width="26" height="27" viewBox="0 0 26 27"><rect x="6.55" y="6.45" width="10.9" height="13" rx="1.6" fill="none" stroke="#444" stroke-width="1.15"/><path d="M6.6 9.45 H17.4" stroke="#444" stroke-width="1" fill="none"/><g fill="#444"><rect x="8.1" y="11.1" width="1.8" height=".8"/><rect x="11.1" y="11.1" width="1.8" height=".8"/><rect x="14.2" y="11.1" width="1.8" height=".8"/><rect x="8.1" y="13.2" width="1.8" height="1.8"/><rect x="11.1" y="13.2" width="1.8" height="1.8"/><rect x="8.1" y="16.2" width="1.8" height="1.8"/><rect x="11.1" y="16.2" width="1.8" height="1.8"/><rect x="14.2" y="13.2" width="1.8" height="4.8"/></g></svg></div><div class="fb" style="right:0px"><svg width="26" height="27" viewBox="0 0 26 27"><rect x="0" y="13" width="26" height="1" fill="#9c9c9c"/><path d="M9.8 9.1 L12 6.3 L14.2 9.1 Z M9.8 19 L12 21.7 L14.2 19 Z" fill="#444"/></svg></div></div>
<div class="cb" style="left:20px;top:371px"></div>
<div class="l " style="left:46px;top:371px;">Учитывать МРОТ при оплате по среднему заработку</div>
<div class="l " style="left:463px;top:370px;color:#0a6ebd;font-size:17px">?</div>
<div class="l gr" style="left:19px;top:402px;">Компенсация отгулов</div>
<div class="l " style="left:19px;top:430px;">Дни:</div>
<div class="f r" style="left:70px;top:425px;width:103px;height:29px;line-height:27px;padding-right:30px;">0,00<div class="fb" style="right:0px"><svg width="26" height="27" viewBox="0 0 26 27"><rect x="6.55" y="6.45" width="10.9" height="13" rx="1.6" fill="none" stroke="#444" stroke-width="1.15"/><path d="M6.6 9.45 H17.4" stroke="#444" stroke-width="1" fill="none"/><g fill="#444"><rect x="8.1" y="11.1" width="1.8" height=".8"/><rect x="11.1" y="11.1" width="1.8" height=".8"/><rect x="14.2" y="11.1" width="1.8" height=".8"/><rect x="8.1" y="13.2" width="1.8" height="1.8"/><rect x="11.1" y="13.2" width="1.8" height="1.8"/><rect x="8.1" y="16.2" width="1.8" height="1.8"/><rect x="11.1" y="16.2" width="1.8" height="1.8"/><rect x="14.2" y="13.2" width="1.8" height="4.8"/></g></svg></div></div>
<div class="l lk" style="left:187px;top:430px;">Выбрать дни</div>
<div class="l " style="left:19px;top:470px;">Часы:</div>
<div class="f r" style="left:70px;top:465px;width:103px;height:29px;line-height:27px;padding-right:30px;">0,00<div class="fb" style="right:0px"><svg width="26" height="27" viewBox="0 0 26 27"><rect x="6.55" y="6.45" width="10.9" height="13" rx="1.6" fill="none" stroke="#444" stroke-width="1.15"/><path d="M6.6 9.45 H17.4" stroke="#444" stroke-width="1" fill="none"/><g fill="#444"><rect x="8.1" y="11.1" width="1.8" height=".8"/><rect x="11.1" y="11.1" width="1.8" height=".8"/><rect x="14.2" y="11.1" width="1.8" height=".8"/><rect x="8.1" y="13.2" width="1.8" height="1.8"/><rect x="11.1" y="13.2" width="1.8" height="1.8"/><rect x="8.1" y="16.2" width="1.8" height="1.8"/><rect x="11.1" y="16.2" width="1.8" height="1.8"/><rect x="14.2" y="13.2" width="1.8" height="4.8"/></g></svg></div></div>
<div class="l lk" style="left:187px;top:470px;">Выбрать дни</div>
<div class="cb" style="left:20px;top:506px"><svg width="23" height="23" viewBox="0 0 23 23" style="position:absolute;left:-1px;top:-5px;overflow:visible"><path d="M4.3 11.5 L8.3 16.5 L17.4 5" fill="none" stroke="#059b4a" stroke-width="3.2" stroke-linecap="round" stroke-linejoin="round"/></svg></div>
<div class="l " style="left:46px;top:506px;">Начислить зарплату</div>
<div class="cb" style="left:284px;top:506px"></div>
<div class="l " style="left:310px;top:506px;">Выплачивать компенсацию неотработанных дней/часов при увольнении</div>
<div class="l " style="left:19px;top:542px;">С:</div>
<div class="f d" style="left:42px;top:537px;width:228px;height:29px;line-height:27px;padding-right:56px;">Сентябрь 2025<div class="fb" style="right:26px"><svg width="26" height="27" viewBox="0 0 26 27"><path d="M6 9.4 Q6 7.6 7.8 7.6 H16.2 Q18 7.6 18 9.4 V11 H6 Z" fill="#444"/><rect x="8.2" y="6" width="2.6" height="3.6" rx="1.3" fill="#444"/><rect x="13.2" y="6" width="2.6" height="3.6" rx="1.3" fill="#444"/><rect x="9" y="6.7" width="1" height="2.1" rx=".5" fill="#fff"/><rect x="14" y="6.7" width="1" height="2.1" rx=".5" fill="#fff"/><rect x="6.55" y="8.2" width="10.9" height="10.3" rx="1.4" fill="none" stroke="#444" stroke-width="1.1"/><g fill="#444"><rect x="8.1" y="12.1" width="1.7" height="1.7"/><rect x="11.15" y="12.1" width="1.7" height="1.7"/><rect x="14.2" y="12.1" width="1.7" height="1.7"/><rect x="8.1" y="15.1" width="1.7" height="1.7"/><rect x="11.15" y="15.1" width="1.7" height="1.7"/><rect x="14.2" y="15.1" width="1.7" height="1.7"/></g></svg></div><div class="fb" style="right:0px"><svg width="26" height="27" viewBox="0 0 26 27"><rect x="0" y="13" width="26" height="1" fill="#9c9c9c"/><path d="M9.8 9.1 L12 6.3 L14.2 9.1 Z M9.8 19 L12 21.7 L14.2 19 Z" fill="#444"/></svg></div></div>
<div class="l " style="left:283px;top:542px;color:#9d9d9d">Дата уведомления:</div>
<div class="f dis" style="left:440px;top:537px;width:153px;height:29px;line-height:27px;padding-right:30px;">&nbsp;&nbsp;.&nbsp;&nbsp;.<div class="fb" style="right:0px"><svg width="26" height="27" viewBox="0 0 26 27"><path d="M6 9.4 Q6 7.6 7.8 7.6 H16.2 Q18 7.6 18 9.4 V11 H6 Z" fill="#8a8a8a"/><rect x="8.2" y="6" width="2.6" height="3.6" rx="1.3" fill="#8a8a8a"/><rect x="13.2" y="6" width="2.6" height="3.6" rx="1.3" fill="#8a8a8a"/><rect x="9" y="6.7" width="1" height="2.1" rx=".5" fill="#fff"/><rect x="14" y="6.7" width="1" height="2.1" rx=".5" fill="#fff"/><rect x="6.55" y="8.2" width="10.9" height="10.3" rx="1.4" fill="none" stroke="#8a8a8a" stroke-width="1.1"/><g fill="#8a8a8a"><rect x="8.1" y="12.1" width="1.7" height="1.7"/><rect x="11.15" y="12.1" width="1.7" height="1.7"/><rect x="14.2" y="12.1" width="1.7" height="1.7"/><rect x="8.1" y="15.1" width="1.7" height="1.7"/><rect x="11.15" y="15.1" width="1.7" height="1.7"/><rect x="14.2" y="15.1" width="1.7" height="1.7"/></g></svg></div></div>
<div class="l " style="left:606px;top:542px;color:#9d9d9d">Компенсировать:</div>
<div class="f dis r" style="left:745px;top:537px;width:154px;height:29px;line-height:27px;padding-right:56px;">0,00<div class="fb" style="right:26px"><svg width="26" height="27" viewBox="0 0 26 27"><rect x="6.55" y="6.45" width="10.9" height="13" rx="1.6" fill="none" stroke="#8a8a8a" stroke-width="1.15"/><path d="M6.6 9.45 H17.4" stroke="#8a8a8a" stroke-width="1" fill="none"/><g fill="#8a8a8a"><rect x="8.1" y="11.1" width="1.8" height=".8"/><rect x="11.1" y="11.1" width="1.8" height=".8"/><rect x="14.2" y="11.1" width="1.8" height=".8"/><rect x="8.1" y="13.2" width="1.8" height="1.8"/><rect x="11.1" y="13.2" width="1.8" height="1.8"/><rect x="8.1" y="16.2" width="1.8" height="1.8"/><rect x="11.1" y="16.2" width="1.8" height="1.8"/><rect x="14.2" y="13.2" width="1.8" height="4.8"/></g></svg></div><div class="fb" style="right:0px"><svg width="26" height="27" viewBox="0 0 26 27"><rect x="0" y="13" width="26" height="1" fill="#c4c4c4"/><path d="M9.8 9.1 L12 6.3 L14.2 9.1 Z M9.8 19 L12 21.7 L14.2 19 Z" fill="#8a8a8a"/></svg></div></div>
<div class="l " style="left:911px;top:542px;color:#8c8c8c">дн.</div>
<div class="l gr" style="left:25px;top:583px;">Начислено</div>
<div class="l gr" style="left:419px;top:583px;">Удержано</div>
<div class="l gr" style="left:796px;top:577px;">Средний заработок</div>
<div class="l" style="left:-103px;width:300px;text-align:right;top:618px">Всего:</div>
<div class="f r" style="left:204px;top:613px;width:202px;height:29px;line-height:27px;padding-right:2.5px;">64 775,05</div>
<div class="l" style="left:268px;width:300px;text-align:right;top:618px">Всего:</div>
<div class="f r" style="left:575px;top:613px;width:202px;height:29px;line-height:27px;padding-right:2.5px;">8 420,00</div>
<div class="l" style="left:-103px;width:300px;text-align:right;top:658px">Компенсации отпуска:</div>
<div class="f r" style="left:204px;top:653px;width:202px;height:29px;line-height:27px;padding-right:2.5px;">0,00</div>
<div class="l" style="left:268px;width:300px;text-align:right;top:658px">НДФЛ:</div>
<div class="f r" style="left:575px;top:653px;width:202px;height:29px;line-height:27px;padding-right:2.5px;">8 420,00</div>
<div class="l" style="left:-103px;width:300px;text-align:right;top:698px">Выходное пособие:</div>
<div class="f r" style="left:204px;top:693px;width:202px;height:29px;line-height:27px;padding-right:2.5px;">0,00</div>
<div class="l" style="left:268px;width:300px;text-align:right;top:698px">Погашение займов:</div>
<div class="f r" style="left:575px;top:693px;width:202px;height:29px;line-height:27px;padding-right:2.5px;">0,00</div>
<div class="l " style="left:796px;top:612px;">Для компенсаций:</div>
<div class="f r" style="left:944px;top:607px;width:202px;height:29px;line-height:27px;padding-right:2.5px;">3 409,45</div>
<div class="l " style="left:796px;top:652px;">Для вых. пособия:</div>
<div class="f r" style="left:944px;top:647px;width:202px;height:29px;line-height:27px;padding-right:2.5px;">4 860,29</div>
<svg class="a" style="left:1158px;top:605px" width="22" height="22" viewBox="0 0 22 22"><g transform="translate(2.9 20) rotate(-45)"><path d="M0 0 L5.6 -3.1 V3.1 Z" fill="#f7b93e" stroke="#9a7a3a" stroke-width=".5"/><path d="M0 0 L2 -1.1 V1.1 Z" fill="#4a3218"/><rect x="5.6" y="-3.1" width="10.8" height="6.2" fill="#41b851" stroke="#2c6e3b" stroke-width=".8"/><path d="M16.4 -3.1 H20 Q21.2 -3.1 21.2 -1.9 V1.9 Q21.2 3.1 20 3.1 H16.4 Z" fill="#5c7591" stroke="#46607a" stroke-width=".8"/></g></svg>
<svg class="a" style="left:1158px;top:645px" width="22" height="22" viewBox="0 0 22 22"><g transform="translate(2.9 20) rotate(-45)"><path d="M0 0 L5.6 -3.1 V3.1 Z" fill="#f7b93e" stroke="#9a7a3a" stroke-width=".5"/><path d="M0 0 L2 -1.1 V1.1 Z" fill="#4a3218"/><rect x="5.6" y="-3.1" width="10.8" height="6.2" fill="#41b851" stroke="#2c6e3b" stroke-width=".8"/><path d="M16.4 -3.1 H20 Q21.2 -3.1 21.2 -1.9 V1.9 Q21.2 3.1 20 3.1 H16.4 Z" fill="#5c7591" stroke="#46607a" stroke-width=".8"/></g></svg>
<svg class="a" style="left:797px;top:687px" width="22" height="22" viewBox="0 0 22 22"><circle cx="11" cy="11" r="9.6" fill="#fff" stroke="#333" stroke-width="1.5"/></svg>
<div class="a" style="left:797px;top:687px;width:22px;height:22px;line-height:22px;text-align:center;font-family:'Liberation Serif',serif;font-style:italic;font-weight:bold;font-size:17px;color:#222">i</div>
<div class="l " style="left:834px;top:688px;color:#8b8060">Использованы данные о заработке за период…</div>
<div class="b " style="left:1222px;top:577px;width:38px;"></div>
<svg class="a" style="left:1233.6px;top:587px" width="14.6" height="13.8" viewBox="0 0 18 17"><g fill="none" stroke="#686868" stroke-width="2.6"><path d="M3.2 7.2 A6 5.4 0 0 1 13.6 4.6"/><path d="M14.8 9.8 A6 5.4 0 0 1 4.4 12.4"/></g><path d="M16.2 0.6 V7.4 H9.4 Z M1.8 16.4 V9.6 H8.6 Z" fill="#686868"/></svg>
<svg class="a" style="left:1013px;top:442px" width="360" height="180" viewBox="0 0 360 180"><path d="M66 10.4 H291.4 A52.3 52.3 0 0 1 291.4 115 H178.4 L103.2 167 L140.4 115 H66 A52.3 52.3 0 0 1 66 10.4 Z" fill="#fff" stroke="#f23c40" stroke-width="1.8" stroke-linejoin="miter"/><text x="177.3" y="56.6" text-anchor="middle" font-family="Liberation Sans, sans-serif" font-weight="bold" font-size="21.3" fill="#f23d3d">Другой размер</text><text x="177.6" y="82.6" text-anchor="middle" font-family="Liberation Sans, sans-serif" font-weight="bold" font-size="21.3" fill="#f23d3d">среднего заработка</text></svg>
<div class="a" style="left:641.5px;top:90.7px;font-size:30px;font-weight:bold;line-height:34px;color:rgba(80,80,120,.17);letter-spacing:1.7px;z-index:5;white-space:nowrap">БУХЭКСПЕРТ</div>
<svg class="a" style="left:556px;top:90px;z-index:5" width="72" height="38" viewBox="0 0 72 38"><g fill="rgba(80,80,120,.17)"><path fill-rule="evenodd" d="M22.8 6.1 A12.3 12.3 0 1 0 22.8 30.7 A12.3 12.3 0 0 0 35.1 20.9 L36.3 18.4 L37.5 20.9 A12.3 12.3 0 1 0 49.8 6.1 A12.3 12.3 0 0 0 36.3 13.4 A12.3 12.3 0 0 0 22.8 6.1 Z M22.8 11.7 A6.7 6.7 0 1 1 22.8 25.1 A6.7 6.7 0 1 1 22.8 11.7 Z M49.8 11.7 A6.7 6.7 0 1 1 49.8 25.1 A6.7 6.7 0 1 1 49.8 11.7 Z"/><path d="M2.5 2.3 H10 Q15 6 22 6.1 Q17 7 13.4 10.4 Q7 8 2.5 2.3 Z M69.7 2.3 H62.2 Q57.2 6 50.2 6.1 Q55.2 7 58.8 10.4 Q65.2 8 69.7 2.3 Z M33.8 27 L36.3 35 L38.8 27 Q36.3 29.4 33.8 27 Z"/></g></svg>
</div></div>
</body></html>
